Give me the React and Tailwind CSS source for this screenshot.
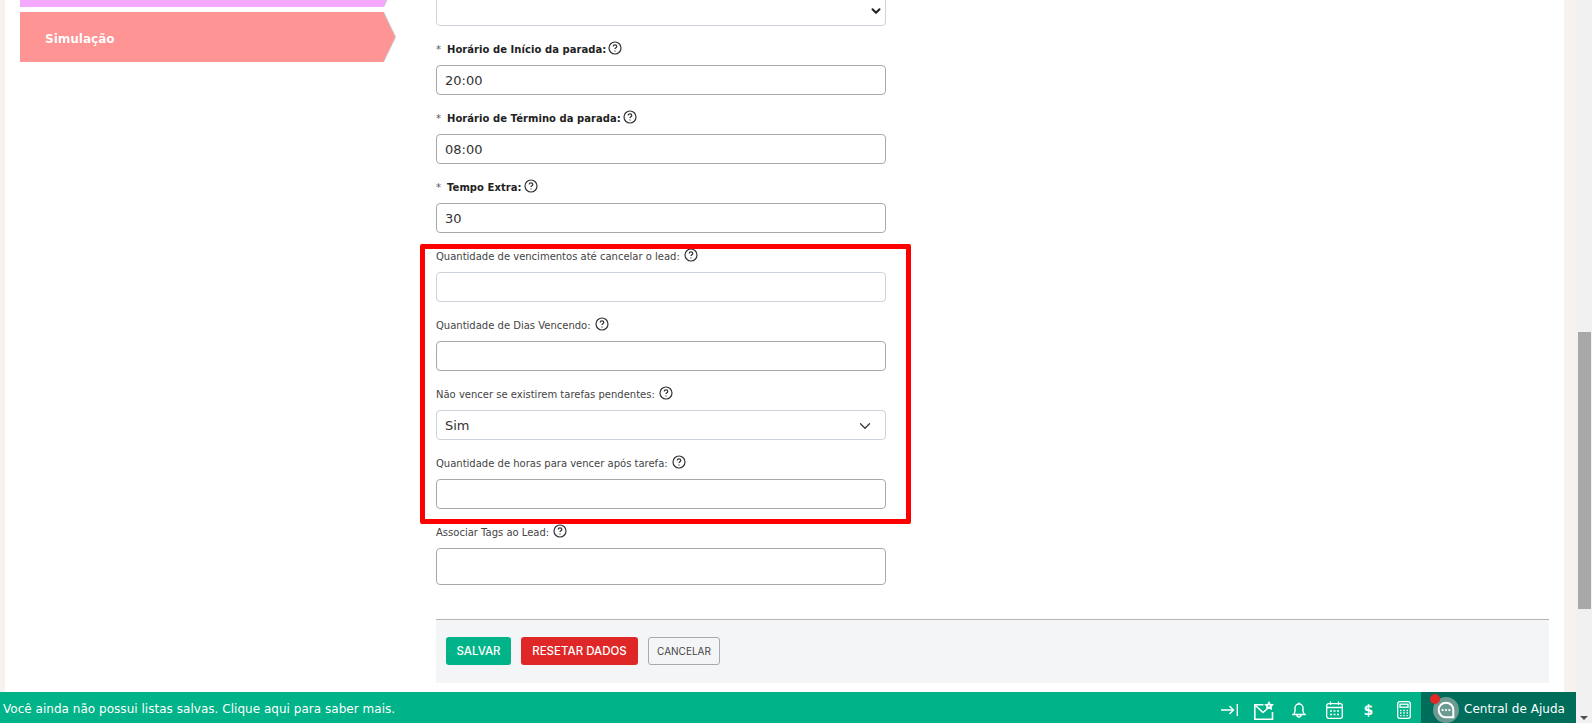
import { ChevronDown } from 'lucide-react';

const font = "font-['DejaVu_Sans','Liberation_Sans',sans-serif]";

function Help({ bold }) {
  return (
    <svg
      viewBox="0 0 14 14"
      className={`h-[14px] w-[14px] -translate-y-[1px] text-[#333] ${bold ? 'ml-[2px]' : 'ml-[4px]'}`}
      fill="none"
      stroke="currentColor"
    >
      <circle cx="7" cy="7" r="6" strokeWidth="1.2" />
      <path d="M5.200 5.600c0-1 .8-1.700 1.800-1.700s1.800.7 1.800 1.600c0 1.300-1.800 1.300-1.800 2.600" strokeWidth="1.200" />
      <path d="M7 9.400v1.100" strokeWidth="1.200" />
    </svg>
  );
}

function Label({ text, required }) {
  return (
    <div className="mb-[5px] flex h-[22px] items-center text-[10px] text-[#444]">
      {required && <span className="mr-[6px] text-[#555]">*</span>}
      <span className={required ? 'font-bold tracking-[0.05px] text-[#222]' : ''}>{text}</span>
      <Help bold={required} />
    </div>
  );
}

function Field({ label, value, required, light, tall }) {
  return (
    <div className="mt-[12px]">
      <Label text={label} required={required} />
      <div
        className={`flex items-center rounded-[4px] border bg-white px-[8px] pt-[1px] text-[13px] text-[#333] ${
          tall ? 'h-[37px]' : 'h-[30px]'
        } ${light ? 'border-[#ccd3dc]' : 'border-[#a9a9a9]'}`}
      >
        {value}
      </div>
    </div>
  );
}

function BarIcons() {
  return (
    <div className="flex items-center pt-[5px] text-white">
      <svg viewBox="0 0 17 12" className="h-[12px] w-[17px]" fill="none" stroke="currentColor" strokeWidth="1.400">
        <path d="M0 6h12.500M8.500 2l4 4-4 4M16.300 0v12" />
      </svg>
      <svg viewBox="0 0 20 19" className="ml-[16px] h-[19px] w-[20px]" fill="none" stroke="currentColor" strokeWidth="1.600">
        <path d="M9.500 3.700H.8v14.500h17.700V11" />
        <path d="M1.500 4.500l7.500 7 3.500-3" />
        <path d="M15 1.800l1 1.900 2.100.3-1.500 1.500.4 2.100-2-1-2 1 .4-2.100L12 4l2.100-.3z" strokeWidth="1.800" />
      </svg>
      <svg viewBox="0 0 14 16" className="ml-[18px] h-[16px] w-[14px]" fill="none" stroke="currentColor" strokeWidth="1.400">
        <path d="M1 12.500c1.200-.7 2-1.700 2-3.500V6a4 4 0 0 1 8 0v3c0 1.800.8 2.800 2 3.500z" />
        <path d="M5 13c0 2.600 4 2.600 4 0M7 .5V2" />
      </svg>
      <svg viewBox="0 0 17 18" className="ml-[20px] h-[18px] w-[17px]" fill="none" stroke="currentColor" strokeWidth="1.300">
        <rect x=".7" y="2.700" width="15.600" height="14.600" rx="2" />
        <path d="M.7 6.500h15.600M4.500 .5v3.500M12.500 .5v3.500" />
        <path d="M4 10h2M7.500 10h2M11 10h2M4 13.500h2M7.500 13.500h2M11 13.500h2" strokeWidth="1.500" />
      </svg>
      <span className="ml-[21px] flex w-[9px] justify-center text-[14px] font-bold leading-none">$</span>
      <svg viewBox="0 0 14 18" className="ml-[24px] h-[18px] w-[14px]" fill="none" stroke="currentColor" strokeWidth="1.300">
        <rect x=".7" y=".7" width="12.600" height="16.600" rx="2" />
        <rect x="3" y="3.200" width="8" height="3" />
        <path d="M3 9.500h1.500M6.300 9.500h1.500M9.500 9.500H11M3 12h1.500M6.300 12h1.500M9.500 12H11M3 14.700h1.500M6.300 14.700h1.500M9.500 14.700H11" />
      </svg>
    </div>
  );
}

export default function App() {
  return (
    <div className={`relative flex h-[723px] overflow-hidden bg-[#f6f2ef] ${font}`}>
      <div className="ml-[5px] flex w-[1559px] shrink-0 bg-white">
        <aside className="w-[431px] shrink-0 pl-[15px]">
          <div className="-mt-[43px] drop-shadow-[1px_0_0_#c4c4c4]">
            <div className="h-[50px] w-[375px] bg-[#f4a8ff] [clip-path:polygon(0_0,363px_0,100%_50%,363px_100%,0_100%)]" />
          </div>
          <div className="mt-[5px] drop-shadow-[1px_0_0_#c4c4c4]">
            <div className="flex h-[50px] w-[375px] items-center bg-[#ff9494] pl-[25px] pt-[3px] text-[12px] font-bold text-white [clip-path:polygon(0_0,363px_0,100%_50%,363px_100%,0_100%)]">
              Simulação
            </div>
          </div>
        </aside>

        <main className="relative w-[1113px] shrink-0">
          <div className="w-[450px]">
            <div className="-mt-[5px] flex h-[31px] items-center justify-end rounded-[4px] border border-[#ccd3dc] pr-[2px]">
              <ChevronDown className="h-[14px] w-[14px] text-[#222]" strokeWidth={3.500} />
            </div>
            <Field label="Horário de Início da parada:" value="20:00" required />
            <Field label="Horário de Término da parada:" value="08:00" required />
            <Field label="Tempo Extra:" value="30" required />
            <Field label="Quantidade de vencimentos até cancelar o lead:" light />
            <Field label="Quantidade de Dias Vencendo:" />
            <div className="mt-[12px]">
              <Label text="Não vencer se existirem tarefas pendentes:" />
              <div className="flex h-[30px] items-center justify-between rounded-[4px] border border-[#ccd3dc] px-[8px] pt-[1px] text-[13px] text-[#333]">
                Sim
                <ChevronDown className="mr-[3px] h-[18px] w-[18px] text-[#333]" strokeWidth={1.600} />
              </div>
            </div>
            <Field label="Quantidade de horas para vencer após tarefa:" />
            <Field label="Associar Tags ao Lead:" tall />
          </div>

          <div className="mt-[34px] flex h-[64px] items-start gap-[10px] border-t border-[#b5b5b5] bg-[#f4f5f7] pl-[10px] pt-[17px] font-['Inter','Liberation_Sans',sans-serif]">
            <button className="h-[28px] w-[65px] rounded-[3px] bg-[#00b388] pt-[1px] text-[11.500px] font-medium text-white">SALVAR</button>
            <button className="h-[28px] w-[117px] rounded-[3px] bg-[#e02727] pt-[1px] text-[11.500px] font-medium text-white">RESETAR DADOS</button>
            <button className="h-[28px] w-[72px] rounded-[3px] border border-[#aaa] text-[10px] text-[#444]">CANCELAR</button>
          </div>

          {/* marcacao vermelha por cima do print */}
          <div className="absolute left-[-16px] top-[244px] h-[280px] w-[491px] rounded-[2px] border-[5px] border-[#ff0000]" />
        </main>
      </div>

      <div className="ml-[12px] w-[16px] shrink-0 bg-[#f1f1f1] pl-[2px] pt-[332px]">
        <div className="h-[277px] w-[13px] bg-[#a8a8a8]" />
      </div>
      <div className="absolute bottom-[3px] right-[4px] h-0 w-0 border-x-[4px] border-t-[4px] border-x-transparent border-t-[#505050]" />

      <footer className="absolute bottom-0 left-0 flex h-[31px] w-[1576px] items-center justify-between bg-[#00b388] pl-[3px] text-[12px] tracking-[0.03px] text-white">
        <span className="pt-[3px]">Você ainda não possui listas salvas. Clique aqui para saber mais.</span>
        <div className="flex h-full items-center">
          <BarIcons />
          <div className="relative ml-[10px] flex h-full w-[155px] items-center overflow-hidden bg-[#006d5b] pl-[12px]">
            <div className="mt-[5px] flex h-[26px] w-[26px] shrink-0 items-center justify-center rounded-full bg-[#6b9a90]">
              <svg viewBox="0 0 16 16" className="h-[18px] w-[18px]">
                <path d="M8 1.500a6.500 6.500 0 1 0 0 13h6.500V8A6.500 6.500 0 0 0 8 1.500z" fill="none" stroke="#fff" strokeWidth="1.800" />
                <circle cx="5" cy="8" r="1" fill="#fff" />
                <circle cx="8" cy="8" r="1" fill="#fff" />
                <circle cx="11" cy="8" r="1" fill="#fff" />
              </svg>
            </div>
            <span className="ml-[5px] pt-[3px]">Central de Ajuda</span>
            <span className="absolute left-[9px] top-[2px] h-[10px] w-[10px] rounded-full bg-[#e32626]" />
          </div>
        </div>
      </footer>
    </div>
  );
}
